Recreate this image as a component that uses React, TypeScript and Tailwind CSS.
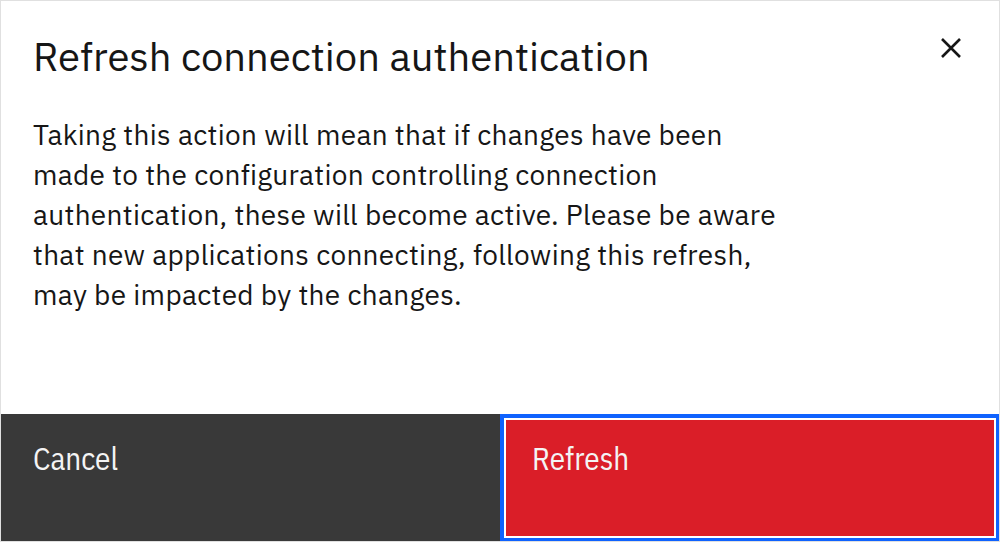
import React from "react";

export default function App() {
  const lines = [
    "Taking this action will mean that if changes have been",
    "made to the configuration controlling connection",
    "authentication, these will become active. Please be aware",
    "that new applications connecting, following this refresh,",
    "may be impacted by the changes.",
  ];
  const btnFont = { fontFamily: "'IBM Plex Sans Condensed', 'IBM Plex Sans', Roboto, sans-serif" };
  return (
    <div
      className="w-[1000px] h-[542px] bg-white border border-[#e0e0e0] flex flex-col overflow-hidden"
      style={{ fontFamily: "'IBM Plex Sans', Roboto, 'Noto Sans', sans-serif" }}
    >
      <div className="flex justify-between h-[95px] shrink-0">
        <h2 className="pl-[32px] pt-[31px] text-[40px] leading-[48px] text-[#161616] font-normal tracking-[0px]">
          Refresh connection authentication
        </h2>
        <button className="w-[96px] h-[95px] flex items-center justify-center">
          <svg width="24" height="24" viewBox="0 0 24 24" className="mt-[-2px]">
            <path d="M3 3 L21 21 M21 3 L3 21" stroke="#161616" strokeWidth="2.6" />
          </svg>
        </button>
      </div>
      <div className="pl-[32px] mt-[19px] text-[28px] leading-[40px] text-[#161616] tracking-[0.32px]">
        {lines.map((l, i) => (
          <div key={i} className="whitespace-nowrap">
            {l}
          </div>
        ))}
      </div>
      <div className="flex-1" />
      <div className="h-[128px] shrink-0 grid grid-cols-2 -mx-px -mb-px">
        <button
          className="bg-[#393939] text-[#f4f4f4] text-left pl-[33px] pt-[25px] flex items-start text-[31px] leading-[40px] tracking-[0px]"
          style={btnFont}
        >
          Cancel
        </button>
        <button
          className="bg-[#da1e28] text-[#f4f4f4] text-left pl-[28px] pt-[21px] flex items-start text-[31px] leading-[40px] tracking-[0px] border-[4px] border-[#0f62fe] shadow-[inset_0_0_0_2px_#ffffff]"
          style={btnFont}
        >
          Refresh
        </button>
      </div>
    </div>
  );
}
